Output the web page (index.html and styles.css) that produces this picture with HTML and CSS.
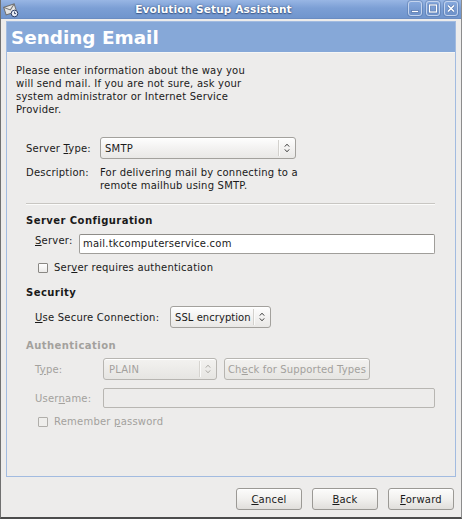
FILE: index.html
```html
<!DOCTYPE html>
<html>
<head>
<meta charset="utf-8">
<title>Evolution Setup Assistant</title>
<link rel="stylesheet" href="styles.css">
</head>
<body>
<div class="window">
  <div class="titlebar">
    <svg class="app-icon" viewBox="0 0 16 16" width="16" height="16">
      <g transform="rotate(-18 7 7)">
        <rect x="1.5" y="3.5" width="11" height="8" fill="#e4e4e4" stroke="#6f6f6f"/>
        <path d="M1.5 3.5 L7 8 L12.5 3.5" fill="none" stroke="#6f6f6f"/>
      </g>
      <circle cx="11.5" cy="11.5" r="3.3" fill="#e8ecf5" stroke="#2f3f66"/>
      <path d="M11.5 9.6 V11.6 H13" fill="none" stroke="#2f3f66" stroke-width="0.9"/>
    </svg>
    <div class="title">Evolution Setup Assistant</div>
    <div class="wm-buttons">
      <span class="wm-btn"><svg viewBox="0 0 12 13" width="12" height="13"><rect x="2.5" y="8.5" width="7" height="2" fill="#fff" stroke="#5b7bb0" stroke-width="0.8"/></svg></span>
      <span class="wm-btn"><svg viewBox="0 0 12 13" width="12" height="13"><rect x="2.5" y="3" width="7" height="7" fill="none" stroke="#5b7bb0" stroke-width="2.4"/><rect x="2.5" y="3" width="7" height="7" fill="none" stroke="#fff" stroke-width="1.2"/></svg></span>
      <span class="wm-btn"><svg viewBox="0 0 12 13" width="12" height="13"><path d="M3 3.5 L9 9.5 M9 3.5 L3 9.5" stroke="#5b7bb0" stroke-width="3" fill="none"/><path d="M3 3.5 L9 9.5 M9 3.5 L3 9.5" stroke="#fff" stroke-width="1.6" fill="none"/></svg></span>
    </div>
  </div>

  <div class="frame">
    <div class="banner">Sending Email</div>
    <div class="page">
      <p class="intro">Please enter information about the way you<br>will send mail. If you are not sure, ask your<br>system administrator or Internet Service<br>Provider.</p>

      <div class="type-grid">
        <span class="lbl">Server <u>T</u>ype:</span>
        <div class="combo combo-type"><span class="combo-text">SMTP</span><span class="combo-arrow"><svg viewBox="0 0 6 10" width="6" height="10"><path d="M0.8 3.6 L3 1.2 L5.2 3.6 M0.8 6.4 L3 8.8 L5.2 6.4" fill="none" stroke="#3a3a3a" stroke-width="1"/></svg></span></div>
        <span class="lbl lbl-top">Description:</span>
        <span class="desc">For delivering mail by connecting to a<br>remote mailhub using SMTP.</span>
      </div>

      <div class="sep"></div>

      <h3 class="section first">Server Configuration</h3>
      <div class="server-row">
        <span class="lbl server-lbl"><u>S</u>erver:</span>
        <div class="entry server-entry">mail.tkcomputerservice.com</div>
      </div>
      <div class="check-row">
        <span class="check"></span>
        <span>Ser<u>v</u>er requires authentication</span>
      </div>

      <h3 class="section security">Security</h3>
      <div class="secure-row">
        <span class="lbl secure-lbl"><u>U</u>se Secure Connection:</span>
        <div class="combo combo-ssl"><span class="combo-text">SSL encryption</span><span class="combo-arrow"><svg viewBox="0 0 6 10" width="6" height="10"><path d="M0.8 3.6 L3 1.2 L5.2 3.6 M0.8 6.4 L3 8.8 L5.2 6.4" fill="none" stroke="#3a3a3a" stroke-width="1"/></svg></span></div>
      </div>

      <h3 class="section auth disabled">Authentication</h3>
      <div class="auth-grid disabled">
        <span class="lbl">T<u>y</u>pe:</span>
        <div class="auth-type">
          <div class="combo combo-plain off"><span class="combo-text">PLAIN</span><span class="combo-arrow"><svg viewBox="0 0 6 10" width="6" height="10"><path d="M0.8 3.6 L3 1.2 L5.2 3.6 M0.8 6.4 L3 8.8 L5.2 6.4" fill="none" stroke="#a9a7a3" stroke-width="1"/></svg></span></div>
          <div class="btn check-btn off">Ch<u>e</u>ck for Supported Types</div>
        </div>
        <span class="lbl">User<u>n</u>ame:</span>
        <div class="entry user-entry off"></div>
      </div>
      <div class="check-row remember disabled">
        <span class="check off"></span>
        <span>Remember <u>p</u>assword</span>
      </div>
    </div>
  </div>

  <div class="actions">
    <div class="btn action"><span><u>C</u>ancel</span></div>
    <div class="btn action"><span><u>B</u>ack</span></div>
    <div class="btn action"><span><u>F</u>orward</span></div>
  </div>
</div>
</body>
</html>
```

FILE: styles.css
```css
* { box-sizing: border-box; }
html, body { margin: 0; padding: 0; }
body {
  width: 462px;
  height: 519px;
  overflow: hidden;
  background: #edeceb;
  font-family: "DejaVu Sans", "Liberation Sans", sans-serif;
  font-size: 10px;
  line-height: 13px;
  letter-spacing: 0.22px;
  color: #1a1a1a;
}
u { text-decoration: underline; text-decoration-thickness: 1px; text-underline-offset: 1px; }

.window {
  width: 462px;
  height: 519px;
  display: flex;
  flex-direction: column;
  border-left: 1px solid #707070;
  border-right: 1px solid #8c8c8c;
  border-bottom: 2px solid #4c4c4c;
  background: #edeceb;
}

/* title bar */
.titlebar {
  flex: none;
  height: 19px;
  display: flex;
  align-items: center;
  padding: 0 3px 0 2px;
  background: linear-gradient(#98b6e4, #7c9fd5 45%, #7095cd);
  border-bottom: 1px solid #6a8cc2;
}
.app-icon { flex: none; margin-top: 1px; }
.title {
  flex: 1;
  text-align: center;
  color: #fff;
  font-weight: bold;
  font-size: 10.6px;
  line-height: 19px;
  letter-spacing: 0.1px;
  text-shadow: 0 0 2px rgba(40, 65, 110, 0.9), 0 1px 1px rgba(40, 65, 110, 0.6);
}
.wm-buttons { display: flex; gap: 4px; flex: none; margin-top: -1px; }
.wm-btn {
  width: 14px;
  height: 15px;
  border: 1px solid #c4d4ee;
  border-radius: 3px;
  background: linear-gradient(#86a8dc, #6d91c9);
  box-shadow: 0 0 0 1px rgba(70, 100, 150, 0.35);
  display: flex;
  align-items: center;
  justify-content: center;
}

/* frame */
.frame {
  flex: 1;
  margin: 2px 5px 0 5px;
  border: 1px solid #a2bbe0;
  display: flex;
  flex-direction: column;
}
.banner {
  flex: none;
  height: 31px;
  background: #86a8d8;
  border-bottom: 1px solid #f6f6f5;
  color: #fff;
  font-weight: bold;
  font-size: 18.4px;
  line-height: 30px;
  letter-spacing: 0;
  padding: 1px 0 0 4px;
}
.page {
  flex: 1;
  padding: 11px 0 0 9px;
}
.intro { margin: 0; white-space: nowrap; }

.lbl { white-space: nowrap; }

.type-grid {
  margin: 21px 0 0 10px;
  display: grid;
  grid-template-columns: 74px 196px;
  row-gap: 7px;
  align-items: center;
}
.lbl-top { align-self: start; }
.desc { white-space: nowrap; }

.combo {
  height: 22px;
  display: flex;
  align-items: center;
  border: 1px solid #a3a19d;
  border-radius: 3px;
  background: linear-gradient(#fefefe, #f3f2f1 50%, #e9e8e6);
  box-shadow: inset 0 1px 0 #fff;
  padding-left: 4px;
}
.combo-text { flex: 1; white-space: nowrap; overflow: hidden; }
.combo-arrow {
  flex: none;
  width: 17px;
  height: 16px;
  border-left: 1px solid #d3d1cd;
  box-shadow: inset 1px 0 0 #fbfbfa;
  display: flex;
  align-items: center;
  justify-content: center;
}

.sep {
  margin: 11px 0 0 10px;
  width: 409px;
  height: 2px;
  border-top: 1px solid #c8c6c2;
  border-bottom: 1px solid #fbfbfa;
}

.section {
  margin: 0 0 0 10px;
  font-size: 10px;
  line-height: 13px;
  font-weight: bold;
  letter-spacing: 0.45px;
}
.section.first { margin-top: 9px; }
.section.security { margin-top: 12px; }
.section.auth { margin-top: 11px; }

.server-row {
  margin: 7px 0 0 19px;
  display: flex;
  align-items: flex-start;
}
.server-lbl { width: 44px; }
.entry {
  height: 20px;
  border: 1px solid #a09e9a;
  border-top-color: #8e8c88;
  border-radius: 2px;
  background: #fff;
  padding: 2px 0 0 3px;
  white-space: nowrap;
}
.server-entry { width: 356px; }

.check-row {
  margin: 7px 0 0 22px;
  display: flex;
  align-items: center;
}
.check {
  width: 10px;
  height: 10px;
  border: 1px solid #8a8884;
  border-radius: 1px;
  background: linear-gradient(#fff, #ecebe9);
  margin-right: 6px;
}
.check.off { border-color: #b0aeaa; background: #efeeec; }

.secure-row {
  margin: 7px 0 0 19px;
  display: flex;
  align-items: center;
}
.secure-lbl { width: 135px; }
.combo-ssl { width: 101px; }
.combo-ssl .combo-text { letter-spacing: 0.05px; }

.disabled { color: #a3a19d; }

.auth-grid {
  margin: 6px 0 0 19px;
  display: grid;
  grid-template-columns: 68px auto;
  row-gap: 8px;
  align-items: center;
}
.auth-type { display: flex; gap: 7px; }
.combo.off {
  border-color: #b7b5b1;
  background: linear-gradient(#f3f2f0, #e6e5e2);
}
.combo.off .combo-arrow { border-left-color: #d6d4d0; }
.combo-plain { width: 114px; padding-left: 5px; }
.entry.off {
  border-color: #b8b6b2;
  background: #edeceb;
}
.user-entry { width: 332px; }

.btn {
  display: flex;
  align-items: center;
  justify-content: center;
  height: 22px;
  border: 1px solid #9b9995;
  border-radius: 3px;
  background: linear-gradient(#fcfcfb, #f1f0ee 50%, #e0dedb);
  box-shadow: inset 0 1px 0 #fff;
  white-space: nowrap;
}
.check-btn { width: 146px; letter-spacing: 0.15px; }
.btn.off {
  border-color: #b7b5b1;
  background: linear-gradient(#f3f2f0, #e6e5e2);
}

.remember { margin-top: 7px; }

.actions {
  flex: none;
  height: 40px;
  display: flex;
  justify-content: flex-end;
  gap: 10px;
  padding: 11px 7px 0 0;
}
.action { width: 66px; }
```
